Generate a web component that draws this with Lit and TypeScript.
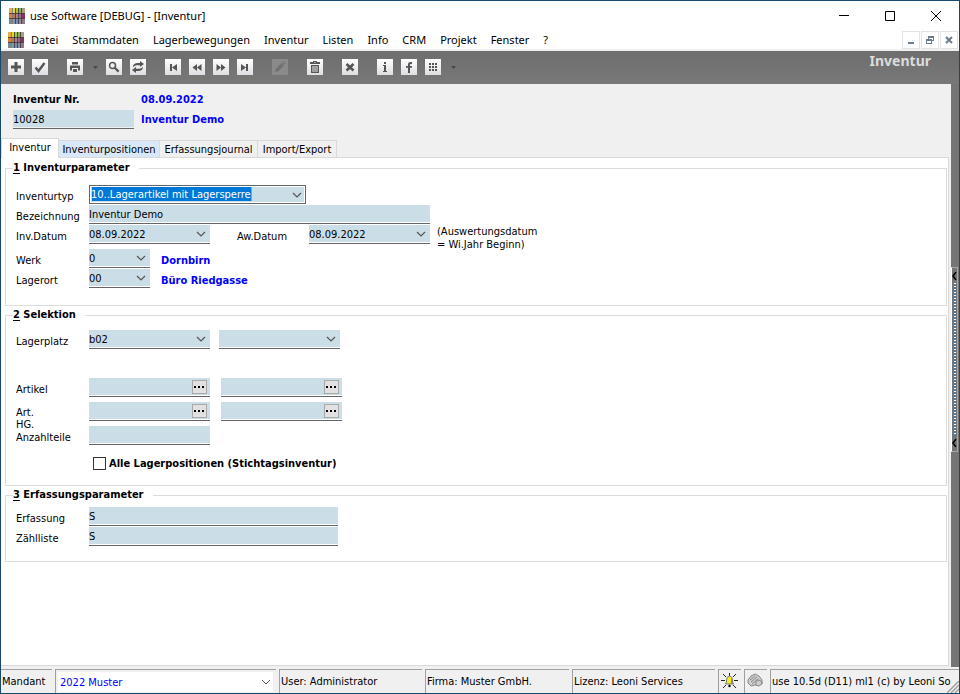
import { LitElement, html, css, svg } from "lit";
import { customElement, property } from "lit/decorators.js";
import { classMap } from "lit/directives/class-map.js";

const glyphs: Record<string, unknown> = {
  plus: svg`<path d="M6.500 3h3v3.500h3.500v3h-3.500v3.500h-3v-3.500h-3.500v-3h3.500z"/>`,
  check: svg`<path d="M3.500 8.500l3 3.500 6-8" fill="none" stroke="currentColor" stroke-width="2.400"/>`,
  print: svg`<path d="M5 3h6v2.500H5zM3 6.500h10v5h-2V9H5v2.500H3zM6 10h4v3H6z"/>`,
  search: svg`<circle cx="6.500" cy="6.500" r="3" fill="none" stroke="currentColor" stroke-width="1.500"/><path d="M8.800 8.800l3.800 3.800" stroke="currentColor" stroke-width="2.200"/>`,
  refresh: svg`<path d="M3 8c0-3 2.500-4 5-4h2V2l4 3-4 3V6.200H8C6 6.200 5 6.500 3 8zM13 8c0 3-2.500 4-5 4H6v2l-4-3 4-3v1.800h2c2 0 3-.3 5-1.800z"/>`,
  first: svg`<path d="M5 5h2v7H5zM12 5v7L7 8.500z"/>`,
  prev: svg`<path d="M8 5v7L3.500 8.500zM12.500 5v7L8 8.500z"/>`,
  next: svg`<path d="M3.500 5v7L8 8.500zM8 5v7l4.500-3.500z"/>`,
  last: svg`<path d="M9 5h2v7H9zM4 5v7l5-3.500z"/>`,
  pencil: svg`<path d="M3 13l1-3.500L9.500 4l2.500 2.500L6.500 12zM10.200 3.300l1-1 2.500 2.500-1 1z"/>`,
  trash: svg`<path d="M6 2h4v1h3v2H3V3h3zM7 3v.6h2V3zM4 6h8v8H4zM5.500 7v6h1V7zM7.500 7v6h1V7zM9.500 7v6h1V7z" fill-rule="evenodd"/>`,
  cross: svg`<path d="M4.500 5l7 6.500M11.500 5l-7 6.500" stroke="currentColor" stroke-width="2.600"/>`,
  info: svg`<path d="M7 3h2v2H7zM6 6h3v6h1v1H6v-1h1V7H6z"/>`,
  f: svg`<path d="M11 3v2h-1.200q-.8 0-.8 1v1h2v1.800H9V14H7V8.800H5V7h2V5.500Q7 3 9.500 3z"/>`,
  grid: svg`<path d="M4 4h2v2H4zM7 4h2v2H7zM10 4h2v2h-2zM4 7h2v2H4zM7 7h2v2H7zM10 7h2v2h-2zM4 10h2v2H4zM7 10h2v2H7zM10 10h2v2h-2z"/>`,
};

const toolGroups: [string, string][][] = [
  [["plus", "Neu"], ["check", "Speichern"]],
  [["print", "Drucken"], ["drop", "Druckoptionen"], ["search", "Suchen"], ["refresh", "Aktualisieren"]],
  [["first", "Erster"], ["prev", "Zurück"], ["next", "Weiter"], ["last", "Letzter"]],
  [["pencil", "Bearbeiten"]],
  [["trash", "Löschen"]],
  [["cross", "Abbrechen"]],
  [["info", "Info"], ["f", "Funktionen"], ["grid", "Raster"], ["drop", "Rasteroptionen"]],
];

const menus = ["Datei", "Stammdaten", "Lagerbewegungen", "Inventur", "Listen", "Info", "CRM", "Projekt", "Fenster", "?"];

const logo = svg`
  <rect width="16" height="16" fill="#8b7c80"/>
  <path fill="#e0b040" d="M0 0h3v5H0z"/><path fill="#e6d825" d="M4 0h2v5H4z"/><path fill="#a8c832" d="M7 0h2v5H7z"/><path fill="#86b060" d="M10 0h2v5h-2z"/><path fill="#a8a078" d="M13 0h3v5h-3z"/>
  <path fill="#d88030" d="M0 6h3v4H0z"/><path fill="#b87850" d="M4 6h2v4H4z"/><path fill="#a88890" d="M7 6h2v4H7z"/><path fill="#a06890" d="M10 6h2v4h-2z"/><path fill="#8c3060" d="M13 6h3v4h-3z"/>
  <path fill="#7a8890" d="M0 11h3v5H0z"/><path fill="#7c9cac" d="M4 11h2v5H4z"/><path fill="#7890a8" d="M7 11h2v5H7z"/><path fill="#8890a8" d="M10 11h2v5h-2z"/><path fill="#907888" d="M13 11h3v5h-3z"/>
  <path fill="none" stroke="#3a2c34" d="M0 5.500h16M0 10.500h16M6.500 0v16M9.500 0v16M12.500 0v16" opacity=".7"/>`;

const text = css`
  input, select, button { font: inherit; color: inherit; margin: 0; border-radius: 0; }
  input, select { box-sizing: border-box; width: 100%; height: 100%; padding: 2px 0 0; border: 0; background: none; outline: 0; }
  select { appearance: none; display: block; }
`;

@customElement("edit-field")
export class EditField extends LitElement {
  static styles = [text, css`
    :host { display: block; box-sizing: border-box; height: 19px; border-bottom: 1px solid #666; padding-bottom: 1px; }
    .box { position: relative; height: 17px; background: #cbdde6; }
    .chevron { position: absolute; right: 4px; top: 6px; width: 10px; height: 6px; pointer-events: none; }
    .more { position: absolute; right: 3px; top: 2px; width: 15px; height: 14px; box-sizing: border-box; padding: 0; border: 1px solid #a9a9a9; background: #e1e1e1; display: grid; place-items: center; }
    :host([focused]) { border: 1px solid #666; padding: 1px; }
    :host([focused]) .box { height: 15px; }
    :host([focused]) .chevron { right: 2px; top: 5px; }
    :host([focused]) select { padding: 0; color: #fff; background: linear-gradient(#0078d7, #0078d7) no-repeat 1px 0 / 159px 14px, linear-gradient(#ff7f27, #ff7f27) no-repeat 160px 0 / 1px 14px; }
  `];
  @property() kind = "text";
  @property() label = "";
  @property() value = "";
  @property({ type: Boolean, reflect: true }) focused = false;
  render() {
    if (this.kind === "select")
      return html`<div class="box"><select aria-label=${this.label}><option>${this.value}</option></select>
        <svg class="chevron" viewBox="0 0 10 6"><path d="M1 1l4 4 4-4" fill="none" stroke="#555" stroke-width="1.200"/></svg></div>`;
    return html`<div class="box"><input type="text" aria-label=${this.label} .value=${this.value}>
      ${this.kind === "lookup" ? html`<button class="more" aria-label="${this.label} suchen"><svg width="11" height="2"><path d="M0 0h2v2H0zM4 0h2v2H4zM8 0h2v2H8z"/></svg></button>` : ""}</div>`;
  }
}

@customElement("app-root")
export class AppRoot extends LitElement {
  static styles = [text, css`
    :host { display: block; font: 11px/13px "DejaVu Sans Condensed", "DejaVu Sans", sans-serif; color: #000; }
    .window { box-sizing: border-box; min-height: 100vh; display: flex; flex-direction: column; border: 1px solid #164a6c; background: #f0f0f0; }
    .title, .menu { background: #fff; font: 11px/16px "Noto Sans", sans-serif; display: flex; align-items: center; }
    .title { height: 29px; padding-left: 8px; gap: 5px; }
    .title h1 { font: inherit; margin: 0; flex: 1; }
    .logo { width: 16px; height: 16px; flex: none; }
    .captions { display: flex; }
    .caption { width: 46px; height: 29px; border: 0; background: none; padding: 0; display: grid; place-items: center; }
    .menu { height: 19px; padding-left: 7px; }
    .menu nav { display: flex; flex: 1; gap: 14px; padding: 1px 0 0 7px; }
    .menu a { color: inherit; text-decoration: none; }
    .mdi { display: flex; gap: 1px; padding-right: 1px; }
    .mdi button { width: 18px; height: 18px; box-sizing: border-box; padding: 0; border: 1px solid #e3e3e3; background: #fff; display: grid; place-items: center; }
    .tools { box-sizing: border-box; height: 33px; margin-top: 2px; padding: 0 28px 1px 7px; background: linear-gradient(#6e6e6e, #787878); display: flex; align-items: center; gap: 19px; }
    .group { display: flex; align-items: center; gap: 8px; }
    .tool { width: 16px; height: 16px; padding: 0; border: 0; background: linear-gradient(#fff, #dedee2); color: #555; display: block; }
    .tool svg { display: block; width: 16px; height: 16px; fill: currentColor; }
    .tool:disabled { background: #8a8a8a; color: #717171; }
    .drop { width: 7px; height: 16px; padding: 0; border: 0; background: none; display: grid; place-items: center end; }
    .tools h2 { margin: 0 0 12px auto; font: bold 14px/18px "Noto Sans", sans-serif; color: #dcdcdc; }
    .body { flex: 1; display: flex; }
    .main { flex: 1; min-width: 0; display: flex; flex-direction: column; padding: 0 2px 1px 0; }
    .head { display: grid; grid-template-columns: 121px 1fr; column-gap: 7px; row-gap: 3px; padding: 9px 12px; align-items: center; }
    .head b, .head span { line-height: 14px; }
    .blue { color: #0000ff; font-weight: bold; }
    .tabs { display: flex; align-items: flex-end; height: 19px; }
    .tab { height: 17px; box-sizing: border-box; padding: 0 3px; border: 1px solid #d9d9d9; border-width: 1px 1px 0 0; background: #f0f0f0; white-space: nowrap; }
    .tab.hot { background: #d8e8f8; width: 101px; }
    .tab.mid { width: 98px; }
    .tab.end { width: 79px; }
    .tab.on { height: 20px; width: 58px; margin-bottom: -1px; padding-bottom: 3px; border-left-width: 1px; background: #fff; position: relative; }
    .panel { flex: 1; background: #fff; border: 1px solid #d9d9d9; border-left-width: 0; padding: 3px 1px 3px 4px; }
    fieldset { margin: 0; border: 1px solid #dcdcdc; box-sizing: border-box; min-width: 0; padding: 0 0 0 10px; }
    legend { font-weight: bold; line-height: 14px; padding: 0 9px 0 0; margin-left: -3px; }
    u { text-underline-offset: 2px; }
    .first { padding-top: 10px; padding-bottom: 16px; }
    .second { padding-top: 8px; padding-bottom: 15px; margin-top: 2px; }
    .third { padding-top: 5px; padding-bottom: 14px; margin-top: 2px; }
    .row { display: flex; height: 20px; }
    .name { flex: none; width: 73px; padding-top: 5px; height: 13px; white-space: nowrap; }
    .name.two { line-height: 12px; }
    .note { padding-left: 7px; }
    .aw { width: 72px; padding-left: 27px; }
    .row > .blue { padding: 5px 0 0 11px; }
    .tall { height: 24px; }
    .gap { margin-top: 4px; }
    .far { margin-top: 24px; }
    .w61 { width: 61px; }
    .w121 { width: 121px; }
    .w217 { width: 217px; }
    .w249 { width: 249px; }
    .w341 { width: 341px; }
    .s9 { margin-left: 9px; }
    .s11 { margin-left: 11px; }
    .tick { display: flex; align-items: center; gap: 3px; margin: 7px 0 0 77px; height: 13px; font-weight: bold; }
    .tick input { appearance: none; width: 13px; height: 13px; padding: 0; border: 1px solid #333; background: #fff; }
    .side { width: 8px; background: #757575; display: flex; align-items: flex-start; }
    .split { width: 7px; height: 185px; box-sizing: border-box; margin-top: 183px; border: 1px solid #a8a8a8; border-left-color: #fff; padding: 4px 0; background: #757575; display: flex; flex-direction: column; align-items: center; gap: 3px; }
    .dots { flex: 1; width: 2px; background: repeating-linear-gradient(#fff 0 1px, #757575 1px 2px, #2f80c0 2px 3px); }
    .status { height: 26px; box-sizing: border-box; padding-top: 2px; display: flex; gap: 3px; position: relative; }
    .cell { box-sizing: border-box; border: 1px solid #a0a0a0; border-width: 1px 0 0 1px; flex: none; padding: 5px 0 0 1px; white-space: nowrap; overflow: hidden; }
    .cell.c51 { width: 51px; border-left: 0; }
    .c143 { width: 143px; }
    .c144 { width: 144px; }
    .cell.c23 { width: 23px; padding: 3px 2px; }
    .cell.combo { width: 221px; padding: 2px 3px 1px 2px; position: relative; color: #0000ff; }
    .combo select { background: #fff; padding: 0 0 0 2px; }
    .combo svg { position: absolute; right: 5px; top: 9px; }
    .rest { flex: 1; min-width: 0; }
    .grip { position: absolute; right: 0; bottom: 0; }
  `];

  private tool([id, name]: [string, string]) {
    if (id === "drop") return html`<button class="drop" aria-label=${name}><svg width="5" height="3"><path d="M0 0h5L2.500 3z" fill="#484848"/></svg></button>`;
    return html`<button class="tool" aria-label=${name} ?disabled=${id === "pencil"}><svg viewBox="0 0 16 16">${glyphs[id]}</svg></button>`;
  }

  private tab(name: string, kind: string) {
    return html`<button role="tab" aria-selected=${kind === "on"} class=${classMap({ tab: true, [kind]: true })}>${name}</button>`;
  }

  private field(cls: string, kind: string, label: string, value = "") {
    return html`<edit-field class=${cls} kind=${kind} label=${label} value=${value}></edit-field>`;
  }

  render() {
    return html`<div class="window">
      <header class="title">
        <svg class="logo" viewBox="0 0 16 16">${logo}</svg>
        <h1>use Software [DEBUG] - [Inventur]</h1>
        <div class="captions">
          <button class="caption" aria-label="Minimieren"><svg width="10" height="10"><path d="M0 4.500h10" stroke="#000"/></svg></button>
          <button class="caption" aria-label="Maximieren"><svg width="10" height="10"><path d="M.5.500h9v9h-9z" fill="none" stroke="#000"/></svg></button>
          <button class="caption" aria-label="Schließen"><svg width="10" height="10"><path d="M0 0l10 10M10 0L0 10" stroke="#000"/></svg></button>
        </div>
      </header>
      <div class="menu">
        <svg class="logo" viewBox="0 0 16 16">${logo}</svg>
        <nav>${menus.map((m) => html`<a href="#">${m}</a>`)}</nav>
        <div class="mdi">
          <button aria-label="Fenster minimieren"><svg width="8" height="8"><path d="M1 6h6v2H1z" fill="#6b7b8b"/></svg></button>
          <button aria-label="Fenster wiederherstellen"><svg width="8" height="8"><path d="M2 0h6v5H6V4h1V2H3v1H2zM0 3h6v5H0zM1 5v2h4V5z" fill="#6b7b8b" fill-rule="evenodd"/></svg></button>
          <button aria-label="Fenster schließen"><svg width="8" height="8"><path d="M1 1l6 6M7 1L1 7" stroke="#6b7b8b" stroke-width="2"/></svg></button>
        </div>
      </div>
      <div class="tools">
        ${toolGroups.map((g) => html`<div class="group">${g.map((t) => this.tool(t))}</div>`)}
        <h2>Inventur</h2>
      </div>
      <div class="body">
        <div class="main">
          <div class="head">
            <b>Inventur Nr.</b><span class="blue">08.09.2022</span>
            ${this.field("", "text", "Inventur Nr.", "10028")}<span class="blue">Inventur Demo</span>
          </div>
          <div class="tabs" role="tablist">
            ${this.tab("Inventur", "on")}${this.tab("Inventurpositionen", "hot")}${this.tab("Erfassungsjournal", "mid")}${this.tab("Import/Export", "end")}
          </div>
          <div class="panel">
            <fieldset class="first">
              <legend><u>1</u> Inventurparameter</legend>
              <div class="row">
                <span class="name">Inventurtyp</span>
                <edit-field class="w217" kind="select" focused label="Inventurtyp" value="10..Lagerartikel mit Lagersperre"></edit-field>
              </div>
              <div class="row"><span class="name">Bezeichnung</span>${this.field("w341", "text", "Bezeichnung", "Inventur Demo")}</div>
              <div class="row">
                <span class="name">Inv.Datum</span>${this.field("w121", "select", "Inv.Datum", "08.09.2022")}
                <span class="name aw">Aw.Datum</span>${this.field("w121", "select", "Aw.Datum", "08.09.2022")}
                <span class="note">(Auswertungsdatum<br>= Wi.Jahr Beginn)</span>
              </div>
              <div class="row gap"><span class="name">Werk</span>${this.field("w61", "select", "Werk", "0")}<span class="blue">Dornbirn</span></div>
              <div class="row"><span class="name">Lagerort</span>${this.field("w61", "select", "Lagerort", "00")}<span class="blue">Büro Riedgasse</span></div>
            </fieldset>
            <fieldset class="second">
              <legend><u>2</u> Selektion</legend>
              <div class="row tall">
                <span class="name">Lagerplatz</span>${this.field("w121", "select", "Lagerplatz von", "b02")}${this.field("w121 s9", "select", "Lagerplatz bis")}
              </div>
              <div class="row tall far"><span class="name">Artikel</span>${this.field("w121", "lookup", "Artikel von")}${this.field("w121 s11", "lookup", "Artikel bis")}</div>
              <div class="row tall"><span class="name two">Art.<br>HG.</span>${this.field("w121", "lookup", "Hauptgruppe von")}${this.field("w121 s11", "lookup", "Hauptgruppe bis")}</div>
              <div class="row tall"><span class="name">Anzahlteile</span>${this.field("w121", "text", "Anzahlteile")}</div>
              <label class="tick"><input type="checkbox">Alle Lagerpositionen (Stichtagsinventur)</label>
            </fieldset>
            <fieldset class="third">
              <legend><u>3</u> Erfassungsparameter</legend>
              <div class="row"><span class="name">Erfassung</span>${this.field("w249", "text", "Erfassung", "S")}</div>
              <div class="row"><span class="name">Zählliste</span>${this.field("w249", "text", "Zählliste", "S")}</div>
            </fieldset>
          </div>
        </div>
        <div class="side">
          <div class="split">
            <svg width="5" height="8"><path d="M4 0L1 4l3 4" fill="none" stroke="#000" stroke-width="1.500"/></svg>
            <div class="dots"></div>
            <svg width="5" height="8"><path d="M4 0L1 4l3 4" fill="none" stroke="#000" stroke-width="1.500"/></svg>
          </div>
        </div>
      </div>
      <footer class="status">
        <div class="cell c51">Mandant</div>
        <div class="cell combo"><select aria-label="Mandant"><option>2022 Muster</option></select><svg width="10" height="6"><path d="M1 1l4 4 4-4" fill="none" stroke="#555"/></svg></div>
        <div class="cell c143">User: Administrator</div>
        <div class="cell c144">Firma: Muster GmbH.</div>
        <div class="cell c143">Lizenz: Leoni Services</div>
        <div class="cell c23"><svg width="17" height="16"><path d="M2 1l3 3M15 1l-3 3M0 7.500h4M13 7.500h4M2 15l3-3M15 15l-3-3M8.500 0v3" stroke="#222"/><path d="M8.500 3q3 .5 3 4v2l1 2h-8l1-2V7q0-3.500 3-4z" fill="#f4ee20" stroke="#777"/><path d="M10 4v7h2z" fill="#888"/><circle cx="8.500" cy="13" r="1.200"/></svg></div>
        <div class="cell c23"><svg width="17" height="16"><path d="M1 7l3-4 4-2 4 2 3 4v4l-3 2-4-1-4 1-3-3z" fill="#ccc" stroke="#888"/><path d="M3 7l5-4M4 9l6-5M5 11l6-5M9 12q-1-4 3-5 4 1 3 4" fill="none" stroke="#888"/></svg></div>
        <div class="cell rest">use 10.5d (D11) ml1 (c) by Leoni So</div>
        <svg class="grip" width="12" height="12"><path d="M0 12L12 0M4 12l8-8M8 12l4-4" stroke="#a0a0a0" stroke-width="1.500"/></svg>
      </footer>
    </div>`;
  }
}
